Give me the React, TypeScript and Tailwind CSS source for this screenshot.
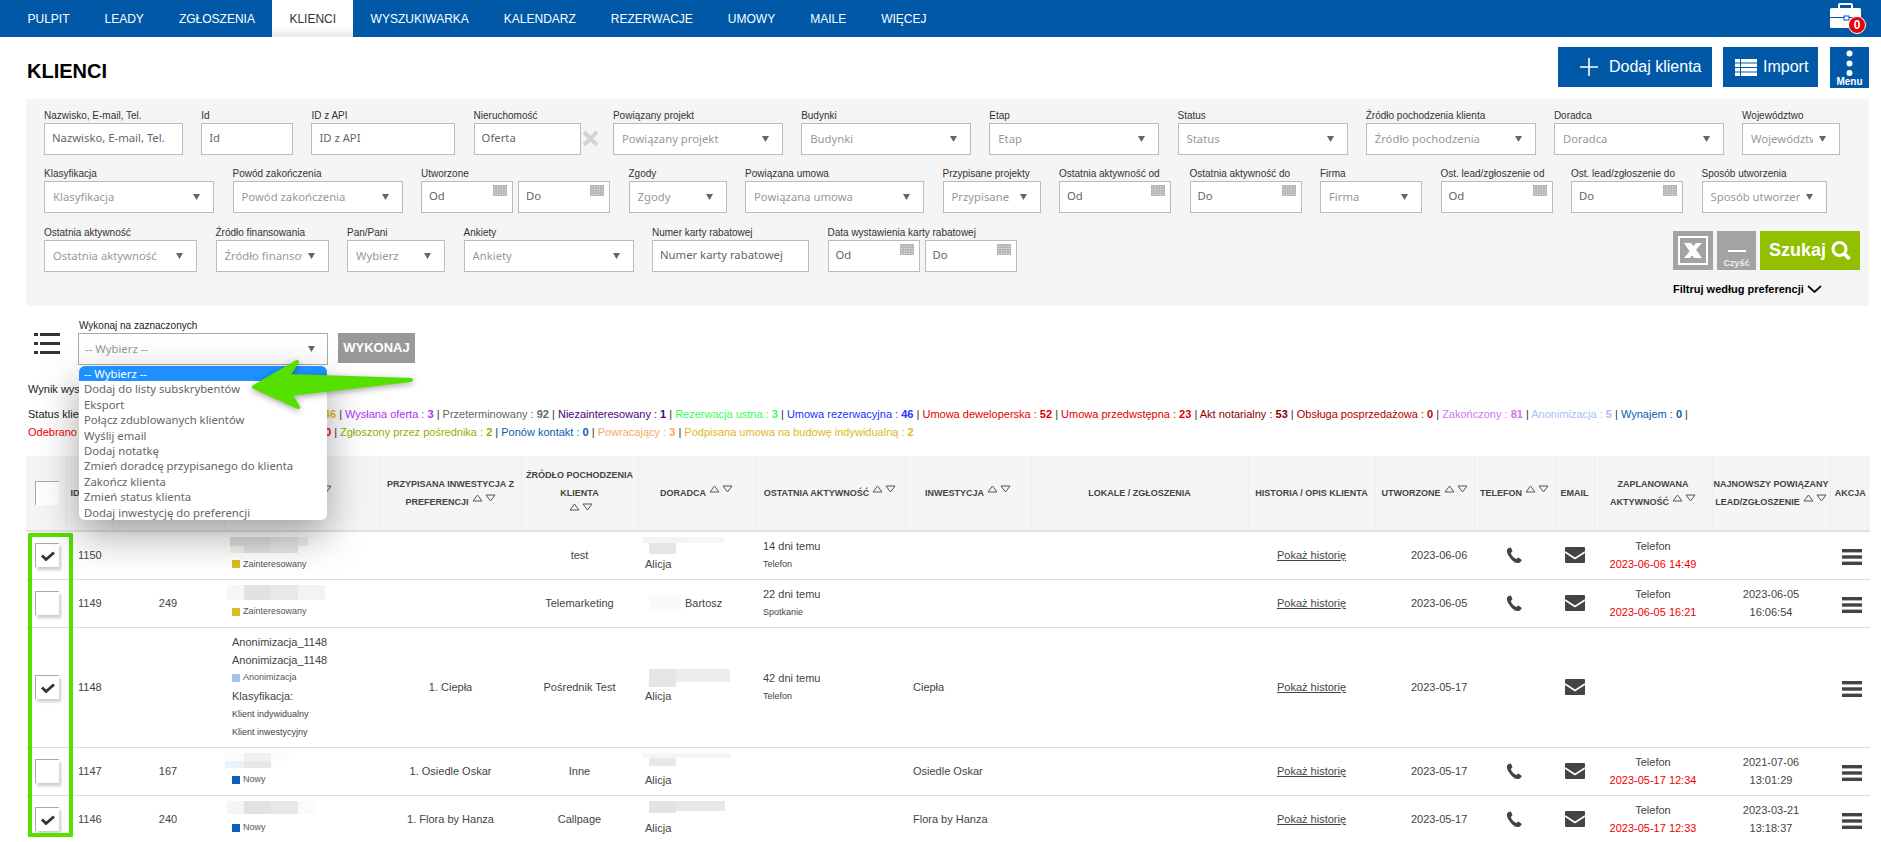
const navItems = ['PULPIT', 'LEADY', 'ZGŁOSZENIA', 'KLIENCI', 'WYSZUKIWARKA', 'KALENDARZ', 'REZERWACJE', 'UMOWY', 'MAILE', 'WIĘCEJ'];

type Field =
  | { kind: 'input'; label: string; text: string; w: string }
  | { kind: 'select'; label: string; text: string; w: string }
  | { kind: 'dates'; label: string }
  | { kind: 'date'; label: string; text: string; w: string };

const rowOne: Field[] = [
  { kind: 'input', label: 'Nazwisko, E-mail, Tel.', text: 'Nazwisko, E-mail, Tel.', w: 'w-[139px]' },
  { kind: 'input', label: 'Id', text: 'Id', w: 'w-[92px]' },
  { kind: 'input', label: 'ID z API', text: 'ID z API', w: 'w-[144px]' },
  { kind: 'input', label: 'Nieruchomość', text: 'Oferta', w: 'w-[107px]' },
];
const rowOneRest: Field[] = [
  { kind: 'select', label: 'Powiązany projekt', text: 'Powiązany projekt', w: 'w-[170px]' },
  { kind: 'select', label: 'Budynki', text: 'Budynki', w: 'w-[170px]' },
  { kind: 'select', label: 'Etap', text: 'Etap', w: 'w-[170px]' },
  { kind: 'select', label: 'Status', text: 'Status', w: 'w-[170px]' },
  { kind: 'select', label: 'Źródło pochodzenia klienta', text: 'Źródło pochodzenia', w: 'w-[170px]' },
  { kind: 'select', label: 'Doradca', text: 'Doradca', w: 'w-[170px]' },
  { kind: 'select', label: 'Województwo', text: 'Województwo', w: 'w-[98px]' },
];
const rowTwo: Field[] = [
  { kind: 'select', label: 'Klasyfikacja', text: 'Klasyfikacja', w: 'w-[170px]' },
  { kind: 'select', label: 'Powód zakończenia', text: 'Powód zakończenia', w: 'w-[170px]' },
  { kind: 'dates', label: 'Utworzone' },
  { kind: 'select', label: 'Zgody', text: 'Zgody', w: 'w-[98px]' },
  { kind: 'select', label: 'Powiązana umowa', text: 'Powiązana umowa', w: 'w-[179px]' },
  { kind: 'select', label: 'Przypisane projekty', text: 'Przypisane', w: 'w-[98px]' },
  { kind: 'date', label: 'Ostatnia aktywność od', text: 'Od', w: 'w-[112px]' },
  { kind: 'date', label: 'Ostatnia aktywność do', text: 'Do', w: 'w-[112px]' },
  { kind: 'select', label: 'Firma', text: 'Firma', w: 'w-[102px]' },
  { kind: 'date', label: 'Ost. lead/zgłoszenie od', text: 'Od', w: 'w-[112px]' },
  { kind: 'date', label: 'Ost. lead/zgłoszenie do', text: 'Do', w: 'w-[112px]' },
  { kind: 'select', label: 'Sposób utworzenia', text: 'Sposób utworzenia', w: 'w-[125px]' },
];
const rowThree: Field[] = [
  { kind: 'select', label: 'Ostatnia aktywność', text: 'Ostatnia aktywność', w: 'w-[153px]' },
  { kind: 'select', label: 'Źródło finansowania', text: 'Źródło finansowania', w: 'w-[113px]' },
  { kind: 'select', label: 'Pan/Pani', text: 'Wybierz', w: 'w-[98px]' },
  { kind: 'select', label: 'Ankiety', text: 'Ankiety', w: 'w-[170px]' },
  { kind: 'input', label: 'Numer karty rabatowej', text: 'Numer karty rabatowej', w: 'w-[157px]' },
  { kind: 'dates', label: 'Data wystawienia karty rabatowej' },
];

const menuOptions = [
  'Dodaj do listy subskrybentów',
  'Eksport',
  'Połącz zdublowanych klientów',
  'Wyślij email',
  'Dodaj notatkę',
  'Zmień doradcę przypisanego do klienta',
  'Zakończ klienta',
  'Zmień status klienta',
  'Dodaj inwestycję do preferencji',
];

function CalendarIcon() {
  return (
    <svg className="absolute right-[5px] top-[3px]" width="14" height="11" viewBox="0 0 14 11">
      <rect width="14" height="11" fill="#b5b5b5" />
      {[1.5, 4, 6.5, 9].map((y) =>
        [1.5, 4, 6.5, 9, 11.5].map((x) => <rect key={`${x}-${y}`} x={x} y={y} width="1" height="1" fill="#eeeeee" />)
      )}
    </svg>
  );
}

function Caret() {
  return (
    <svg className="shrink-0" width="7" height="6" viewBox="0 0 7 6">
      <path d="M0 0h7L3.5 6z" fill="#666666" />
    </svg>
  );
}

const labelClass = 'h-[14px] whitespace-nowrap text-[10px] leading-[13px] text-[#333]';
const boxText = "font-['Noto_Sans',sans-serif] text-[11.3px]";

function FieldBox({ field }: { field: Field }) {
  if (field.kind === 'dates') {
    return (
      <div className="shrink-0">
        <div className={labelClass}>{field.label}</div>
        <div className="flex gap-[5px]">
          {['Od', 'Do'].map((t) => (
            <div key={t} className={`relative h-[32px] w-[92px] border border-[#bbb] bg-white pl-[7px] leading-[28px] text-[#666] ${boxText}`}>
              {t}
              <CalendarIcon />
            </div>
          ))}
        </div>
      </div>
    );
  }
  if (field.kind === 'date') {
    return (
      <div className={`shrink-0 ${field.w}`}>
        <div className={labelClass}>{field.label}</div>
        <div className={`relative h-[32px] border border-[#bbb] bg-white pl-[7px] leading-[28px] text-[#666] ${boxText}`}>
          {field.text}
          <CalendarIcon />
        </div>
      </div>
    );
  }
  if (field.kind === 'input') {
    return (
      <div className={`shrink-0 ${field.w}`}>
        <div className={labelClass}>{field.label}</div>
        <div className={`h-[32px] overflow-hidden whitespace-nowrap border border-[#bbb] bg-white pl-[7px] leading-[28px] text-[#666] ${boxText}`}>
          {field.text}
        </div>
      </div>
    );
  }
  return (
    <div className={`shrink-0 ${field.w}`}>
      <div className={labelClass}>{field.label}</div>
      <div className={`flex h-[32px] items-center border border-[#bbb] bg-white pl-[8px] pr-[13px] text-[#999] ${boxText}`}>
        <span className="mr-[6px] min-w-0 flex-1 overflow-hidden whitespace-nowrap">{field.text}</span>
        <Caret />
      </div>
    </div>
  );
}

function SortArrows() {
  return (
    <svg className="ml-[3px] inline-block align-[3px]" width="24" height="8" viewBox="0 0 24 8">
      <path d="M1 7h9L5.5 1z" fill="none" stroke="#555" />
      <path d="M14 1h9l-4.5 6z" fill="none" stroke="#555" />
    </svg>
  );
}

function PhoneIcon() {
  return (
    <svg className="mx-auto block" width="17" height="17" viewBox="0 0 17 17">
      <path
        d="M2.5 1 5 .5l1.5 4L4.8 6Q6 10 10.5 12l1.8-1.5 3.7 2.5-2 2.6q-3 1.4-6.5-1.1Q1.5 9 .8 4 .8 2 2.5 1z"
        fill="#444"
      />
    </svg>
  );
}

function MailIcon() {
  return (
    <svg className="mx-auto block" width="20" height="16" viewBox="0 0 20 16">
      <rect width="20" height="16" rx="1" fill="#444" />
      <path d="M0 5l10 6.5L20 5" fill="none" stroke="#fff" strokeWidth="1.6" />
    </svg>
  );
}

function Tiles({ rows, className }: { rows: string[][]; className?: string }) {
  return (
    <div className={className}>
      {rows.map((row, i) => (
        <div key={i} className="flex">
          {row.map((tile, j) => (
            <div key={j} className={tile} />
          ))}
        </div>
      ))}
    </div>
  );
}

function Status({ color, text }: { color: string; text: string }) {
  return (
    <div className="flex h-[18px] items-center text-[9px] text-[#555]">
      <span className={`mr-[3px] h-[8px] w-[8px] ${color}`} />
      {text}
    </div>
  );
}

const columnWidths = ['w-[40px]', 'w-[46px]', 'w-[112px]', 'w-[156px]', 'w-[141px]', 'w-[117px]', 'w-[117px]', 'w-[150px]', 'w-[126px]', 'w-[217px]', 'w-[127px]', 'w-[99px]', 'w-[81px]', 'w-[39px]', 'w-[118px]', 'w-[118px]', 'w-[40px]'];

function HeaderCell({ children, sort, className = '' }: { children: React.ReactNode; sort?: boolean; className?: string }) {
  return (
    <th className={`border-r border-[#eee] text-center align-middle text-[9px] font-bold leading-[18px] text-[#444] ${className}`}>
      {children}
      {sort && <SortArrows />}
    </th>
  );
}

type Row = {
  checked: boolean;
  id: string;
  api: string;
  name: React.ReactNode;
  pref: string;
  source: string;
  advisor: React.ReactNode;
  activity?: [string, string];
  invest: string;
  created: string;
  phone: boolean;
  plan?: [string, string];
  lead?: [string, string];
  h: string;
};

const ZAINT = 'bg-[#d9bc2b]';
const NOWY = 'bg-[#0a62b5]';

const rows: Row[] = [
  {
    checked: true,
    id: '1150',
    api: '',
    name: (
      <>
        <Tiles
          className="ml-[-2px] h-[18px]"
          rows={[
            ['h-[9px] w-[41px] bg-[#dedede]', 'h-[9px] w-[27px] bg-[#e6e6e6]', 'h-[9px] w-[10px] bg-[#eee]'],
            ['h-[7px] w-[14px] bg-[#f3f2e6]', 'h-[7px] w-[27px] bg-[#e2e2e2]', 'h-[7px] w-[27px] bg-[#e8e8e8]'],
          ]}
        />
        <Status color={ZAINT} text="Zainteresowany" />
      </>
    ),
    pref: '',
    source: 'test',
    advisor: (
      <>
        <Tiles
          className="ml-[-3px] h-[18px]"
          rows={[
            ['h-[6px] w-[45px] bg-[#f4f4f4]', 'h-[6px] w-[37px] bg-[#f6f6f6]'],
            ['ml-[7px] h-[11px] w-[27px] bg-[#e5e5e5]'],
          ]}
        />
        <div className="leading-[18px]">Alicja</div>
      </>
    ),
    activity: ['14 dni temu', 'Telefon'],
    invest: '',
    created: '2023-06-06',
    phone: true,
    plan: ['Telefon', '2023-06-06 14:49'],
    h: 'h-[48px]',
  },
  {
    checked: false,
    id: '1149',
    api: '249',
    name: (
      <>
        <Tiles
          className="ml-[-5px] h-[18px]"
          rows={[['h-[15px] w-[17px] bg-[#f6f6f6]', 'h-[15px] w-[27px] bg-[#e2e2e2]', 'h-[15px] w-[27px] bg-[#e8e8e8]', 'h-[15px] w-[27px] bg-[#f3f3f3]']]}
        />
        <Status color={ZAINT} text="Zainteresowany" />
      </>
    ),
    pref: '',
    source: 'Telemarketing',
    advisor: (
      <div className="flex items-center">
        <div className="ml-[4px] mr-[4px] h-[17px] w-[32px] bg-[#fafafa]" />
        Bartosz
      </div>
    ),
    activity: ['22 dni temu', 'Spotkanie'],
    invest: '',
    created: '2023-06-05',
    phone: true,
    plan: ['Telefon', '2023-06-05 16:21'],
    lead: ['2023-06-05', '16:06:54'],
    h: 'h-[48px]',
  },
  {
    checked: true,
    id: '1148',
    api: '',
    name: (
      <>
        <div className="leading-[18px]">Anonimizacja_1148</div>
        <div className="leading-[18px]">Anonimizacja_1148</div>
        <Status color="bg-[#a9bff0]" text="Anonimizacja" />
        <div className="leading-[18px]">Klasyfikacja:</div>
        <div className="text-[9px] leading-[18px]">Klient indywidualny</div>
        <div className="text-[9px] leading-[18px]">Klient inwestycyjny</div>
      </>
    ),
    pref: '1. Ciepła',
    source: 'Pośrednik Test',
    advisor: (
      <>
        <Tiles
          className="ml-[4px] h-[18px]"
          rows={[
            ['h-[13px] w-[27px] bg-[#e5e5e5]', 'h-[13px] w-[54px] bg-[#ececec]'],
            ['h-[5px] w-[27px] bg-[#e5e5e5]'],
          ]}
        />
        <div className="leading-[18px]">Alicja</div>
      </>
    ),
    activity: ['42 dni temu', 'Telefon'],
    invest: 'Ciepła',
    created: '2023-05-17',
    phone: false,
    h: 'h-[120px]',
  },
  {
    checked: false,
    id: '1147',
    api: '167',
    name: (
      <>
        <Tiles
          className="ml-[-7px] h-[18px]"
          rows={[
            ['h-[8px] w-[19px] bg-[#fbfbfb]', 'h-[8px] w-[27px] bg-[#f0f0f0]', 'h-[8px] w-[18px] bg-[#fbfbfb]'],
            ['h-[7px] w-[19px] bg-[#e8f2fa]', 'h-[7px] w-[27px] bg-[#e8e8e8]'],
          ]}
        />
        <Status color={NOWY} text="Nowy" />
      </>
    ),
    pref: '1. Osiedle Oskar',
    source: 'Inne',
    advisor: (
      <>
        <Tiles
          className="ml-[-3px] h-[18px]"
          rows={[
            ['h-[5px] w-[89px] bg-[#f5f5f5]'],
            ['ml-[7px] h-[8px] w-[27px] bg-[#e8e8e8]'],
          ]}
        />
        <div className="leading-[18px]">Alicja</div>
      </>
    ),
    activity: undefined,
    invest: 'Osiedle Oskar',
    created: '2023-05-17',
    phone: true,
    plan: ['Telefon', '2023-05-17 12:34'],
    lead: ['2021-07-06', '13:01:29'],
    h: 'h-[48px]',
  },
  {
    checked: true,
    id: '1146',
    api: '240',
    name: (
      <>
        <Tiles
          className="ml-[-5px] h-[18px]"
          rows={[['h-[13px] w-[17px] bg-[#f5f5f5]', 'h-[13px] w-[27px] bg-[#e2e2e2]', 'h-[13px] w-[27px] bg-[#e8e8e8]', 'h-[13px] w-[18px] bg-[#fafafa]']]}
        />
        <Status color={NOWY} text="Nowy" />
      </>
    ),
    pref: '1. Flora by Hanza',
    source: 'Callpage',
    advisor: (
      <>
        <Tiles
          className="ml-[4px] h-[18px]"
          rows={[
            ['h-[10px] w-[27px] bg-[#e3e3e3]', 'h-[10px] w-[49px] bg-[#e8e8e8]'],
            ['h-[2px] w-[27px] bg-[#e3e3e3]'],
          ]}
        />
        <div className="leading-[18px]">Alicja</div>
      </>
    ),
    activity: undefined,
    invest: 'Flora by Hanza',
    created: '2023-05-17',
    phone: true,
    plan: ['Telefon', '2023-05-17 12:33'],
    lead: ['2023-03-21', '13:18:37'],
    h: 'h-[48px]',
  },
];

function Sep() {
  return <span className="text-[#333]"> | </span>;
}

function Stat({ color, label, n }: { color: string; label: string; n: string }) {
  return (
    <span className={color}>
      {label} : <b>{n}</b>
    </span>
  );
}

export default function App() {
  return (
    <div className="relative h-[842px] w-[1881px] overflow-hidden bg-white font-['Liberation_Sans',Arial,sans-serif] text-[12px] text-[#444]">
      {/* top nav */}
      <nav className="flex h-[37px] items-stretch bg-[#0058a6] pl-[10px] pr-[16px] text-[12px] text-white">
        {navItems.map((item) => (
          <a
            key={item}
            className={
              item === 'KLIENCI'
                ? 'flex items-center bg-gradient-to-b from-white from-70% to-[#e8e8e8] px-[17px] text-[#333]'
                : 'flex items-center px-[17.5px]'
            }
          >
            {item}
          </a>
        ))}
        <div className="relative ml-auto mt-[3px] h-[27px] w-[35px]">
          <svg width="31" height="25" viewBox="0 0 31 25">
            <path d="M9 6V2a1 1 0 0 1 1-1h11a1 1 0 0 1 1 1v4" fill="none" stroke="#fff" strokeWidth="2" />
            <path d="M1.5 5h28A1.5 1.5 0 0 1 31 6.500V14H0V6.500A1.500 1.500 0 0 1 1.500 5z" fill="#fff" />
            <path d="M0 15h31v8.500a1.500 1.500 0 0 1-1.500 1.500h-28A1.500 1.500 0 0 1 0 23.500z" fill="#fff" />
            <rect x="14" y="13" width="5" height="4" fill="#fff" stroke="#0058a6" />
          </svg>
          <span className="absolute bottom-[-4px] right-[-1px] flex h-[18px] w-[18px] items-center justify-center rounded-full border border-white bg-[#e8000b] text-[12px] font-bold text-white">
            0
          </span>
        </div>
      </nav>

      <main className="pl-[26px] pr-[12px]">
        {/* page header */}
        <header className="flex h-[62px] items-start justify-between">
          <h1 className="ml-px mt-[22px] text-[20px] font-bold leading-[24px] text-black">KLIENCI</h1>
          <div className="mt-[10px] flex">
            <button className="flex h-[40px] w-[154px] items-center gap-[11px] bg-[#0058a6] pl-[22px] text-[16px] text-white">
              <svg width="18" height="18" viewBox="0 0 18 18">
                <path d="M9 0v18M0 9h18" stroke="#fff" strokeWidth="1.6" />
              </svg>
              Dodaj klienta
            </button>
            <button className="ml-[11px] flex h-[40px] w-[95px] items-center gap-[6px] bg-[#0058a6] pl-[12px] text-[16px] text-white">
              <svg width="22" height="17" viewBox="0 0 22 17" fill="#fff">
                <path d="M0 0h5v3.500H0zM6 0h16v3.500H6zM0 4.500h5V8H0zM6 4.500h16V8H6zM0 9h5v3.500H0zM6 9h16v3.500H6zM0 13.500h5V17H0zM6 13.500h16V17H6z" />
              </svg>
              Import
            </button>
            <button className="ml-[12px] flex h-[41px] w-[39px] flex-col items-center bg-[#0058a6] pt-[3px] text-[10px] font-bold leading-[12px] text-white">
              <svg width="7" height="26" viewBox="0 0 7 26" fill="#fff">
                <circle cx="3.500" cy="3.500" r="3" />
                <circle cx="3.500" cy="13.500" r="3" />
                <circle cx="3.500" cy="23" r="3" />
              </svg>
              Menu
            </button>
          </div>
        </header>

        {/* filters */}
        <section className="bg-[#f5f5f5] pb-[9px] pl-[18px] pr-[9px] pt-[10px]">
          <div className="flex gap-[18.2px]">
            {rowOne.map((f) => (
              <FieldBox key={f.label} field={f} />
            ))}
            <div className="-mx-[18.2px] w-[32.4px] pl-[1px] pt-[14px] font-bold">
              <svg className="mt-[7px]" width="17" height="17" viewBox="0 0 17 17">
                <path d="M2 2l13 13M15 2 2 15" stroke="#d4d4d4" strokeWidth="4" />
              </svg>
            </div>
            {rowOneRest.map((f) => (
              <FieldBox key={f.label} field={f} />
            ))}
          </div>
          <div className="mt-[12px] flex gap-[18.5px]">
            {rowTwo.map((f) => (
              <FieldBox key={f.label} field={f} />
            ))}
          </div>
          <div className="mt-[13px] flex gap-[18.5px]">
            {rowThree.map((f) => (
              <FieldBox key={f.label} field={f} />
            ))}
            <div className="ml-auto mt-[5px] w-[187px]">
              <div className="flex h-[39px]">
                <button className="flex w-[40px] items-center justify-center bg-[#a3a3a3]">
                  <svg width="30" height="29" viewBox="0 0 30 29">
                    <rect x="1" y="1" width="28" height="27" fill="none" stroke="#fff" strokeWidth="2" />
                    <path d="M6 7h7l11 15h-8zM18 7h6l-7 8-3-3zM6 22l6-7 3 3-3 4z" fill="#fff" />
                  </svg>
                </button>
                <button className="ml-[4px] flex w-[39px] flex-col items-center bg-[#a3a3a3] text-[9px] font-bold text-[#eee]">
                  <span className="mt-[19px] h-[2px] w-[18px] bg-white" />
                  <span className="mt-[6px] leading-[10px]">Czyść</span>
                </button>
                <button className="ml-[4px] flex w-[100px] items-center justify-center gap-[5px] bg-[#92c000] text-[18px] font-bold text-white">
                  Szukaj
                  <svg width="20" height="19" viewBox="0 0 20 19">
                    <circle cx="8.500" cy="8" r="6.500" fill="none" stroke="#fff" strokeWidth="3" />
                    <path d="M13 12.500l5.500 5.500" stroke="#fff" strokeWidth="3.600" />
                  </svg>
                </button>
              </div>
              <div className="mt-[11px] flex h-[16px] items-center whitespace-nowrap text-[11px] font-bold text-black">
                Filtruj według preferencji
                <svg className="ml-[3px]" width="15" height="8" viewBox="0 0 15 8">
                  <path d="M1 1l6.500 6L14 1" fill="none" stroke="#111" strokeWidth="1.800" />
                </svg>
              </div>
            </div>
          </div>
        </section>

        {/* bulk actions */}
        <div className="mt-[12px] flex items-start">
          <svg className="ml-[8px] mr-[18px] mt-[15px]" width="26" height="22" viewBox="0 0 26 22" fill="#333">
            <rect width="4" height="3" />
            <rect x="6" width="20" height="3" />
            <rect y="9" width="4" height="3" />
            <rect x="6" y="9" width="20" height="3" />
            <rect y="18" width="4" height="3" />
            <rect x="6" y="18" width="20" height="3" />
          </svg>
          <div className="relative w-[250px]">
            <div className="ml-px h-[15px] text-[10px] leading-[15px] text-[#222]">Wykonaj na zaznaczonych</div>
            <div className={`flex h-[32px] items-center justify-between border border-[#aaa] bg-white pl-[6px] pr-[12px] text-[#999] ${boxText}`}>
              -- Wybierz --
              <Caret />
            </div>
            <div className={`absolute left-[1px] top-[48px] z-20 w-[248px] overflow-hidden rounded-[6px] bg-white leading-[15.4px] text-[#666] shadow-[0_15px_40px_rgba(0,0,0,0.35)] ${boxText}`}>
              <div className="bg-[#1e90ff] pl-[5px] text-white">-- Wybierz --</div>
              {menuOptions.map((o) => (
                <div key={o} className="pl-[5px]">
                  {o}
                </div>
              ))}
            </div>
          </div>
          <button className="ml-[10px] mt-[15px] h-[30px] w-[77px] bg-[#999] text-[13px] font-bold text-white">WYKONAJ</button>
        </div>

        {/* stats */}
        <div className="ml-[2px] mt-[15px] h-[18px] text-[11px] leading-[18px] text-[#222]">Wynik wyszukiwania : 425</div>
        <div className="ml-[2px] mt-[7px] whitespace-nowrap text-[11px] leading-[18px]">
          <div>
            <span className="inline-flex w-[317px] justify-between text-[#222]">
              <span>Status klientów</span>
              <span className="mr-[3px]">
                <span className="text-[#d9bc2b]">
                  <b>46</b>
                </span>
                <span className="text-[#333]"> |</span>
              </span>
            </span>
            <Stat color="text-[#b030f0]" label="Wysłana oferta" n="3" />
            <Sep />
            <Stat color="text-[#666]" label="Przeterminowany" n="92" />
            <Sep />
            <Stat color="text-[#4b0082]" label="Niezainteresowany" n="1" />
            <Sep />
            <Stat color="text-[#33ff55]" label="Rezerwacja ustna" n="3" />
            <Sep />
            <Stat color="text-[#2233ff]" label="Umowa rezerwacyjna" n="46" />
            <Sep />
            <Stat color="text-[#e00000]" label="Umowa deweloperska" n="52" />
            <Sep />
            <Stat color="text-[#e00000]" label="Umowa przedwstępna" n="23" />
            <Sep />
            <Stat color="text-[#8b0000]" label="Akt notarialny" n="53" />
            <Sep />
            <Stat color="text-[#b00000]" label="Obsługa posprzedażowa" n="0" />
            <Sep />
            <Stat color="text-[#cc77ee]" label="Zakończony" n="81" />
            <Sep />
            <Stat color="text-[#a8bff0]" label="Anonimizacja" n="5" />
            <Sep />
            <Stat color="text-[#0a5bb0]" label="Wynajem" n="0" />
            <Sep />
          </div>
          <div>
            <span className="inline-flex w-[312px] justify-between text-[#f00000]">
              <span>Odebrano</span>
              <span className="mr-[3px]">
                <b>0</b>
                <span className="text-[#333]"> |</span>
              </span>
            </span>
            <Stat color="text-[#8fb000]" label="Zgłoszony przez pośrednika" n="2" />
            <Sep />
            <Stat color="text-[#0a5bb0]" label="Ponów kontakt" n="0" />
            <Sep />
            <Stat color="text-[#f5a860]" label="Powracający" n="3" />
            <Sep />
            <Stat color="text-[#dcb820]" label="Podpisana umowa na budowę indywidualną" n="2" />
          </div>
        </div>

        {/* clients table */}
        <div className="relative mt-[15px]">
          <table className="w-[1843px] table-fixed border-collapse">
            <colgroup>
              {columnWidths.map((w, i) => (
                <col key={i} className={w} />
              ))}
            </colgroup>
            <thead>
              <tr className="h-[75px] border-b-2 border-[#e2e2e2] bg-[#f5f5f5]">
                <th className="border-r border-[#eee] align-middle">
                  <div className="ml-[9px] h-[24px] w-[24px] border-l border-t border-[#aaa] bg-white" />
                </th>
                <HeaderCell className="pl-[4px] !text-left">ID</HeaderCell>
                <HeaderCell>ID Z API</HeaderCell>
                <HeaderCell sort className="pr-[16px]">NAZWISKO</HeaderCell>
                <HeaderCell sort>
                  PRZYPISANA INWESTYCJA Z<br />
                  PREFERENCJI
                </HeaderCell>
                <HeaderCell sort>
                  ŹRÓDŁO POCHODZENIA
                  <br />
                  KLIENTA
                  <br />
                </HeaderCell>
                <HeaderCell sort>DORADCA</HeaderCell>
                <HeaderCell sort>OSTATNIA AKTYWNOŚĆ</HeaderCell>
                <HeaderCell sort>INWESTYCJA</HeaderCell>
                <HeaderCell>LOKALE / ZGŁOSZENIA</HeaderCell>
                <HeaderCell>HISTORIA / OPIS KLIENTA</HeaderCell>
                <HeaderCell sort>UTWORZONE</HeaderCell>
                <HeaderCell sort>TELEFON</HeaderCell>
                <HeaderCell>EMAIL</HeaderCell>
                <HeaderCell sort>
                  ZAPLANOWANA
                  <br />
                  AKTYWNOŚĆ
                </HeaderCell>
                <HeaderCell sort>
                  NAJNOWSZY POWIĄZANY
                  <br />
                  LEAD/ZGŁOSZENIE
                </HeaderCell>
                <HeaderCell className="border-r-0">AKCJA</HeaderCell>
              </tr>
            </thead>
            <tbody>
              {rows.map((r) => (
                <tr key={r.id} className={`${r.h} border-b border-[#ddd] text-[11px] text-[#444]`}>
                  <td className="align-middle">
                    <div className="ml-[9px] flex h-[24px] w-[24px] items-center justify-center border-l border-t border-[#aaa] bg-white shadow-[2px_3px_3px_rgba(0,0,0,0.2)]">
                      {r.checked && (
                        <svg width="14" height="10" viewBox="0 0 14 10">
                          <path d="M1 4.500 5 8.500 13 1.500" fill="none" stroke="#333" strokeWidth="2.800" />
                        </svg>
                      )}
                    </div>
                  </td>
                  <td className="pl-[12px]">{r.id}</td>
                  <td className="text-center">{r.api}</td>
                  <td className="pl-[8px]">{r.name}</td>
                  <td className="text-center">{r.pref}</td>
                  <td className="text-center">{r.source}</td>
                  <td className="pl-[7px]">{r.advisor}</td>
                  <td className="pl-[8px]">
                    {r.activity && (
                      <>
                        <div className="leading-[18px]">{r.activity[0]}</div>
                        <div className="text-[9px] leading-[18px]">{r.activity[1]}</div>
                      </>
                    )}
                  </td>
                  <td className="pl-[8px]">{r.invest}</td>
                  <td />
                  <td className="text-center">
                    <a className="underline">Pokaż historię</a>
                  </td>
                  <td className="pl-[36px]">{r.created}</td>
                  <td>{r.phone && <PhoneIcon />}</td>
                  <td>
                    <MailIcon />
                  </td>
                  <td className="text-center leading-[18px]">
                    {r.plan && (
                      <>
                        <div>{r.plan[0]}</div>
                        <div className="text-[#f00000]">{r.plan[1]}</div>
                      </>
                    )}
                  </td>
                  <td className="text-center leading-[18px]">
                    {r.lead && (
                      <>
                        <div>{r.lead[0]}</div>
                        <div>{r.lead[1]}</div>
                      </>
                    )}
                  </td>
                  <td>
                    <svg className="ml-[12px] mt-[3px] block" width="20" height="16" viewBox="0 0 20 16" fill="#444">
                      <rect width="20" height="3.400" />
                      <rect y="6.300" width="20" height="3.400" />
                      <rect y="12.600" width="20" height="3.400" />
                    </svg>
                  </td>
                </tr>
              ))}
            </tbody>
          </table>
          {/* green highlight round the checkboxes */}
          <div className="pointer-events-none absolute left-[2px] top-[77px] h-[304px] w-[45px] rounded-[1px] border-[4px] border-[#55e000]" />
        </div>
      </main>

      {/* green arrow pointing at the menu */}
      <svg className="pointer-events-none absolute left-[240px] top-[350px] z-30 drop-shadow-[0_2px_3px_rgba(0,0,0,0.35)]" width="180" height="70" viewBox="240 350 180 70">
        <path d="M254 387 297 362 288 376 411 380 290 394 298 407Z" fill="#55e000" stroke="#55e000" strokeWidth="4" strokeLinejoin="round" />
      </svg>
    </div>
  );
}
